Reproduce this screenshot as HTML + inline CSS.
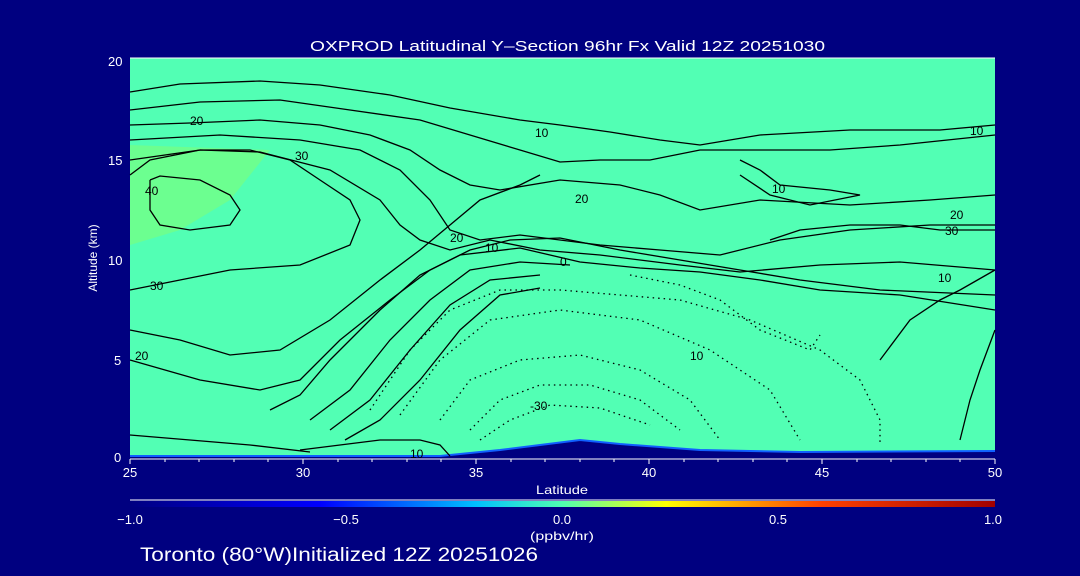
<!DOCTYPE html>
<html><head><style>
html,body{margin:0;padding:0;background:#000080;width:1080px;height:576px;overflow:hidden}
svg{display:block}
text{font-family:"Liberation Sans",sans-serif;fill:#fff}
</style></head><body>
<svg width="1080" height="576" viewBox="0 0 1080 576" xmlns="http://www.w3.org/2000/svg">
<defs>
<linearGradient id="cb" x1="0" x2="1">
<stop offset="0" stop-color="#000080"/>
<stop offset="0.22" stop-color="#0000ff"/>
<stop offset="0.4" stop-color="#00c0ff"/>
<stop offset="0.5" stop-color="#50ffb0"/>
<stop offset="0.62" stop-color="#ffff00"/>
<stop offset="0.8" stop-color="#ff4000"/>
<stop offset="1" stop-color="#a00000"/>
</linearGradient>
</defs>
<rect width="1080" height="576" fill="#000080"/>
<text x="310" y="51" font-size="15" textLength="515" lengthAdjust="spacingAndGlyphs">OXPROD Latitudinal Y–Section 96hr  Fx Valid 12Z 20251030</text>
<rect x="130" y="58" width="865" height="400" fill="#52ffb4"/>
<polygon points="130,145 270,150 230,200 180,230 130,245" fill="#6cff90"/>
<polygon points="130,456 440,456 500,450 540,445 580,440 620,444 700,450 800,452 995,452 995,460 130,460" fill="#000080"/>
<polyline points="130,456 440,456 500,450 540,445 580,440 620,444 700,450 800,452 995,451" fill="none" stroke="#1060ff" stroke-width="2"/>
<line x1="130" y1="58" x2="995" y2="58" stroke="#fff"/>
<g fill="none" stroke="#000" stroke-width="1.3">
<polyline points="130,92 180,84 260,81 320,85 390,95 450,108 520,120 560,125 610,132 660,140 700,145 760,135 850,130 940,130 995,125"/>
<polyline points="130,110 200,102 280,100 350,110 420,120 470,135 520,150 560,162 600,160 650,160 700,150 760,150 830,150 900,145 995,135"/>
<polyline points="130,125 190,123 260,120 320,125 370,135 410,150 440,170 470,185 500,190 560,180 620,185 660,195 700,210 760,200 850,205 930,200 995,195"/>
<polyline points="130,140 220,135 300,140 360,150 400,170 430,200 450,230 480,240 520,235 560,240 600,245 660,250 720,255 780,240 850,230 930,225 995,225"/>
<polyline points="130,160 200,150 260,152 330,170 380,200 400,225 420,240 450,250 490,240 540,250 600,255 680,265 740,272 820,265 900,262 995,270"/>
<polyline points="150,180 160,176 200,180 230,195 240,210 230,225 190,230 160,225 150,210 150,180"/>
<polyline points="130,290 180,280 230,270 300,265 350,245 360,220 350,200 320,180 290,160 250,150 200,150 150,160 130,175"/>
<polyline points="130,330 180,340 230,355 280,350 330,320 380,280 420,250 450,225 480,200 520,185 540,175"/>
<polyline points="130,360 200,380 260,390 300,380 340,340 390,300 430,270 470,250 510,240 560,238 620,250 680,260 740,270 800,280 880,290 995,295"/>
<polyline points="270,410 300,395 330,360 380,310 420,275 460,255 520,248 580,262 640,268 700,272 760,280 820,290 900,295 995,310"/>
<polyline points="310,420 350,390 390,340 430,300 470,270 520,262 570,265"/>
<polyline points="330,430 370,400 410,350 450,305 490,280 540,275"/>
<polyline points="345,440 380,420 420,380 460,330 500,295 540,288"/>
<polyline points="130,435 250,445 310,452"/>
<polyline points="300,450 380,440 420,440 440,445 450,456"/>
<polyline points="880,360 910,320 940,300 960,290 995,270"/>
<polyline points="960,440 970,400 980,370 995,330"/>
<polyline points="770,240 800,230 850,225 900,225 940,230 995,230"/>
<polyline points="740,160 760,170 780,185 830,190 860,195 810,205 770,195 740,175"/>
</g>
<g fill="none" stroke="#000" stroke-width="1.3" stroke-dasharray="1.5,4">
<polyline points="370,410 410,350 450,310 500,290 560,290 620,295 680,300 750,320 820,350 860,380 880,420 880,445"/>
<polyline points="400,415 440,360 490,320 560,310 640,320 710,350 770,390 800,440"/>
<polyline points="440,420 470,380 520,360 580,355 640,370 690,400 720,440"/>
<polyline points="470,430 500,400 540,385 590,385 640,400 680,430"/>
<polyline points="480,440 510,420 550,405 600,408 650,425"/>
<polyline points="630,275 680,285 720,300 760,330 810,350 820,335"/>
</g>
<g font-size="12">
<text x="190" y="125" style="fill:#000">20</text>
<text x="295" y="160" style="fill:#000">30</text>
<text x="145" y="195" style="fill:#000">40</text>
<text x="150" y="290" style="fill:#000">30</text>
<text x="535" y="137" style="fill:#000">10</text>
<text x="575" y="203" style="fill:#000">20</text>
<text x="450" y="242" style="fill:#000">20</text>
<text x="485" y="252" style="fill:#000">10</text>
<text x="560" y="266" style="fill:#000">0</text>
<text x="772" y="193" style="fill:#000">10</text>
<text x="950" y="219" style="fill:#000">20</text>
<text x="945" y="235" style="fill:#000">30</text>
<text x="938" y="282" style="fill:#000">10</text>
<text x="970" y="135" style="fill:#000">10</text>
<text x="690" y="360" style="fill:#000">10</text>
<text x="530" y="410" style="fill:#000">-30</text>
<text x="410" y="458" style="fill:#000">10</text>
<text x="135" y="360" style="fill:#000">20</text>
</g>
<g stroke="#fff" stroke-width="1">
<line x1="130" y1="459" x2="995" y2="459"/>
<line x1="130" y1="459" x2="130" y2="464"/><line x1="165" y1="459" x2="165" y2="462"/><line x1="199" y1="459" x2="199" y2="462"/><line x1="234" y1="459" x2="234" y2="462"/><line x1="268" y1="459" x2="268" y2="462"/><line x1="303" y1="459" x2="303" y2="464"/><line x1="338" y1="459" x2="338" y2="462"/><line x1="372" y1="459" x2="372" y2="462"/><line x1="407" y1="459" x2="407" y2="462"/><line x1="441" y1="459" x2="441" y2="462"/><line x1="476" y1="459" x2="476" y2="464"/><line x1="511" y1="459" x2="511" y2="462"/><line x1="545" y1="459" x2="545" y2="462"/><line x1="580" y1="459" x2="580" y2="462"/><line x1="614" y1="459" x2="614" y2="462"/><line x1="649" y1="459" x2="649" y2="464"/><line x1="684" y1="459" x2="684" y2="462"/><line x1="718" y1="459" x2="718" y2="462"/><line x1="753" y1="459" x2="753" y2="462"/><line x1="787" y1="459" x2="787" y2="462"/><line x1="822" y1="459" x2="822" y2="464"/><line x1="857" y1="459" x2="857" y2="462"/><line x1="891" y1="459" x2="891" y2="462"/><line x1="926" y1="459" x2="926" y2="462"/><line x1="960" y1="459" x2="960" y2="462"/><line x1="995" y1="459" x2="995" y2="464"/>
</g>
<g font-size="13">
<text x="108" y="66">20</text><text x="108" y="165">15</text><text x="108" y="265">10</text><text x="114" y="365">5</text><text x="114" y="462">0</text>
<text x="130" y="477" text-anchor="middle">25</text><text x="303" y="477" text-anchor="middle">30</text><text x="476" y="477" text-anchor="middle">35</text><text x="649" y="477" text-anchor="middle">40</text><text x="822" y="477" text-anchor="middle">45</text><text x="995" y="477" text-anchor="middle">50</text>
<text x="536" y="494" font-size="12" textLength="52" lengthAdjust="spacingAndGlyphs">Latitude</text>
<text transform="translate(97,258) rotate(-90)" text-anchor="middle" font-size="12">Altitude (km)</text>
</g>
<line x1="130" y1="500" x2="995" y2="500" stroke="#fff"/>
<rect x="130" y="501" width="865" height="6" fill="url(#cb)"/>
<g font-size="13">
<text x="130" y="524" text-anchor="middle">−1.0</text><text x="346" y="524" text-anchor="middle">−0.5</text><text x="562" y="524" text-anchor="middle">0.0</text><text x="778" y="524" text-anchor="middle">0.5</text><text x="993" y="524" text-anchor="middle">1.0</text>
<text x="530" y="540" font-size="12" textLength="64" lengthAdjust="spacingAndGlyphs">(ppbv/hr)</text>
</g>
<text x="140" y="561" font-size="19" textLength="398" lengthAdjust="spacingAndGlyphs">Toronto (80°W)Initialized 12Z 20251026</text>
</svg>
</body></html>
